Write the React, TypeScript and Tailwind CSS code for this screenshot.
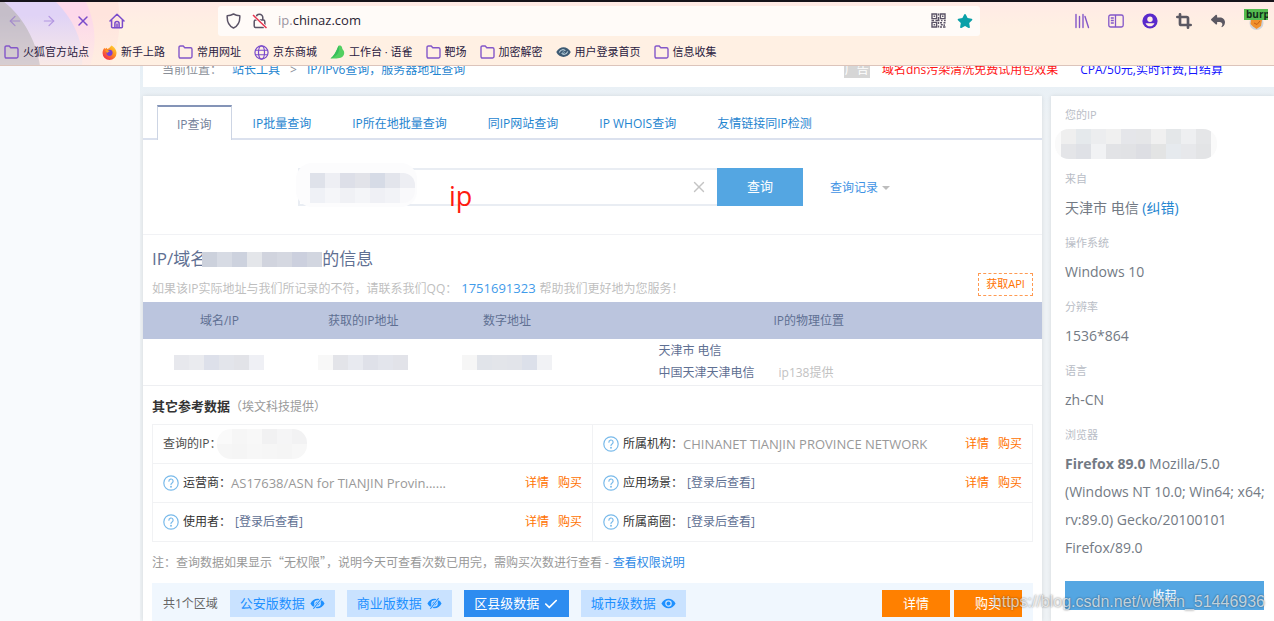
import React, { useState } from "react";
import { ArrowLeft, ArrowRight, Crop, X } from "lucide-react";
import { FaCheck, FaReply, FaStar } from "react-icons/fa6";
import cn from "clsx";

type BookmarkIcon = "folder" | "firefox" | "globe" | "leaf" | "eye";

const bookmarks: { icon: BookmarkIcon; label: string }[] = [
  { icon: "folder", label: "火狐官方站点" },
  { icon: "firefox", label: "新手上路" },
  { icon: "folder", label: "常用网址" },
  { icon: "globe", label: "京东商城" },
  { icon: "leaf", label: "工作台 · 语雀" },
  { icon: "folder", label: "靶场" },
  { icon: "folder", label: "加密解密" },
  { icon: "eye", label: "用户登录首页" },
  { icon: "folder", label: "信息收集" },
];

const tabs = [
  "IP查询",
  "IP批量查询",
  "IP所在地批量查询",
  "同IP网站查询",
  "IP WHOIS查询",
  "友情链接同IP检测",
];

function FolderIcon() {
  return (
    <svg viewBox="0 0 15 14" className="h-[14px] w-[15px]" fill="none" stroke="#8457c9" strokeWidth="1.4">
      <path d="M1 2.4C1 1.5 1.6 1 2.4 1h2.8l1.6 1.8h5.8c.9 0 1.4.5 1.4 1.4v7.4c0 .9-.5 1.4-1.4 1.4H2.4C1.5 13 1 12.5 1 11.6z" />
    </svg>
  );
}

function FirefoxIcon() {
  return (
    <svg viewBox="0 0 16 16" className="h-[15px] w-[15px]">
      <defs>
        <linearGradient id="fox" x1="1" y1="0" x2="0.2" y2="1">
          <stop offset="0" stopColor="#ffe83d" />
          <stop offset="0.45" stopColor="#ff9420" />
          <stop offset="1" stopColor="#f2234f" />
        </linearGradient>
      </defs>
      <path d="M10 .5c2.8 1.5 5.5 4.2 5.5 8A7.4 7.4 0 0 1 .6 8.500C.6 6 1.500 4 2.700 2.800l.5 1.400 1.700-1.400.7 1.400C7.500 4 8.500 2.500 10 .5z" fill="url(#fox)" />
      <circle cx="8" cy="8.300" r="3.300" fill="#7a3fd0" />
      <path d="M3.400 5.500c2-.6 4 .1 4.800 1.500-1.400 0-2 .8-2.600 1.800z" fill="#ff9b20" />
    </svg>
  );
}

function GlobeIcon() {
  return (
    <svg viewBox="0 0 16 16" className="h-[15px] w-[15px]" fill="none" stroke="#7a4bcb" strokeWidth="1.3">
      <circle cx="8" cy="8" r="7" />
      <ellipse cx="8" cy="8" rx="3.2" ry="7" />
      <path d="M1.500 5.600h13M1.500 10.400h13" />
    </svg>
  );
}

function LeafIcon() {
  return (
    <svg viewBox="0 0 15 14" className="h-[14px] w-[15px]">
      <path d="M.5 13.500C4 11 6 7 8.500.8c1.600-.6 3.100.1 3.500 1.500.3 1 .1 1.700 1.200 2.700 1.500 1.800 1.400 4.800-.5 6.400-2.400 2.100-6 2.100-12.200 2.100z" fill="#52cf61" />
      <path d="M8.500.8C6 7 4 11 .5 13.500c3-.8 5.500-2.600 7.500-5.300C9.200 6.400 9.500 3.500 8.500.8z" fill="#37bf5b" />
    </svg>
  );
}

function EyeLogoIcon() {
  return (
    <svg viewBox="0 0 16 12" className="h-[12px] w-[15px]">
      <path d="M.3 6C2 2.500 5 .8 8 .8S14 2.500 15.700 6C14 9.500 11 11.200 8 11.200S2 9.500.3 6z" fill="#3d5a73" />
      <path d="M3.500 6.500c1.500-3.500 5-3.800 6.500-1.500M12.500 5.500c-1.500 3.500-5 3.800-6.500 1.500" fill="none" stroke="#b7cbd6" strokeWidth="1.2" />
      <path d="M7 5l2.500 2M6.500 6.500l2 1.500" stroke="#8fb0c2" />
    </svg>
  );
}

function BookmarkGlyph({ icon }: { icon: BookmarkIcon }) {
  if (icon === "firefox") return <FirefoxIcon />;
  if (icon === "globe") return <GlobeIcon />;
  if (icon === "leaf") return <LeafIcon />;
  if (icon === "eye") return <EyeLogoIcon />;
  return <FolderIcon />;
}

function QrIcon() {
  return (
    <svg viewBox="0 0 15 15" className="h-[15px] w-[15px]" fill="none" stroke="#5b5366" strokeWidth="1.4">
      <path d="M1 1h4.600v4.600H1zM9.400 1H14v4.600H9.400zM1 9.400h4.600V14H1z" />
      <path d="M2.600 3.300h1.500M11 3.300h1.500M2.600 11.700h1.500M7.500.5v2M7.500 4v3M.5 7.500H3M4.500 7.500h4M10 7.500h1.500M13 7.500h1.700M7.500 9v2M7.500 12.500v2M9 9.700h2M12.500 9.700h2M9.800 11.800h2M13.200 11.200v1.800M9 14h2M12 14h2.500" />
    </svg>
  );
}

function EyeIcon({ slashed = false }: { slashed?: boolean }) {
  return (
    <svg viewBox="0 0 16 12" className="h-[11px] w-[15px]" fill="none">
      <path d="M.3 6C2 2.500 4.800.8 8 .8S14 2.500 15.700 6C14 9.500 11.200 11.200 8 11.200S2 9.500.3 6z" fill="currentColor" />
      <circle cx="8" cy="6" r="2.900" stroke="#c9e2ff" strokeWidth="1.4" />
      {slashed && (
        <>
          <path d="M3.500 11.800 12.500.2" stroke="#c9e2ff" strokeWidth="2.600" />
          <path d="M3.500 11.800 12.500.2" stroke="currentColor" strokeWidth="1.100" />
        </>
      )}
    </svg>
  );
}

function BrowserChrome() {
  return (
    <header className="relative h-[66px] shrink-0 overflow-hidden border-t-2 border-b border-t-[#15131a] border-b-[#dcc4bb] bg-linear-to-b from-[#ffeae5] to-[#fff0e3] to-40%">
      {/* 主题背景 */}
      <svg viewBox="0 0 130 64" className="absolute top-0 left-0 h-[64px] w-[130px]">
        <defs>
          <linearGradient id="fade" x1="0" y1="0" x2="0" y2="1">
            <stop offset="0.2" stopColor="#fff0e3" stopOpacity="0" />
            <stop offset="1" stopColor="#fff0e3" stopOpacity="0.8" />
          </linearGradient>
        </defs>
        <path d="M0 0h118c4 24 0 46-8 64H0z" fill="#ffe4dd" />
        <path d="M0 0h86c10 22 11 44 4 64H0z" fill="#fdd8ea" />
        <path d="M0 0h56c18 18 28 40 26 64H0z" fill="#e0d3f6" />
        <path d="M0 0h4c18 14 32 38 36 64H0z" fill="#c5bec9" />
        <path d="M0 0h130v64H0z" fill="url(#fade)" />
        <path d="M0 0h4c18 14 32 38 36 64H0z" fill="#c5bec9" fillOpacity="0.6" />
      </svg>

      <div className="relative flex h-[36px] items-center pt-px pr-[6px] pl-[7px]">
        <nav className="flex items-center gap-[18px] text-[#7a4bcb]">
          <button type="button" aria-label="后退" className="opacity-45">
            <ArrowLeft className="h-4 w-4" strokeWidth={1.8} />
          </button>
          <button type="button" aria-label="前进" className="opacity-45">
            <ArrowRight className="h-4 w-4" strokeWidth={1.8} />
          </button>
          <button type="button" aria-label="停止">
            <X className="h-4 w-4" strokeWidth={2.2} />
          </button>
          <button type="button" aria-label="主页">
            <svg viewBox="0 0 16 16" className="h-4 w-4" fill="none" stroke="currentColor" strokeWidth="1.5" strokeLinecap="round" strokeLinejoin="round">
              <path d="M1 8 8 1.200 15 8M2.600 6.800v7c0 .6.300 1 1 1h8.800c.7 0 1-.4 1-1v-7" />
              <path d="M5.900 14.600v-4a2.100 2.100 0 0 1 4.200 0v4M8 11v3.600" />
            </svg>
          </button>
        </nav>

        <div className="ml-[93px] flex h-[30px] flex-1 items-center gap-[11px] rounded-[3px] bg-[#fffbf8] pr-[7px] pl-2">
          <svg viewBox="0 0 15 16" className="h-4 w-[15px]" fill="none" stroke="#5b5366" strokeWidth="1.5" strokeLinejoin="round">
            <path d="M7.500 1c2 1.200 4 1.700 6.300 1.700.3 5.500-1.300 10-6.300 12.300C2.500 12.700.9 8.200 1.200 2.700 3.500 2.700 5.500 2.200 7.500 1z" />
          </svg>
          <svg viewBox="0 0 15 16" className="h-4 w-[15px]" fill="none" stroke="#5b5366" strokeWidth="1.5">
            <rect x="2.200" y="7" width="10.600" height="7.600" rx="1.500" />
            <path d="M4.200 7V4.500a3.300 3.300 0 0 1 6.600 0V7" />
            <path d="M1 2l13.500 13" stroke="#fffbf8" strokeWidth="3" />
            <path d="M1 2l13.500 13" stroke="#e8334f" />
          </svg>
          <label htmlFor="address" className="text-[13px] whitespace-pre text-[#9b94a1]">
            ip.<span className="text-[#2a2433]">chinaz.com</span>
          </label>
          <input id="address" type="text" className="min-w-0 flex-1 bg-transparent text-[13px] outline-none" />
          <QrIcon />
          <FaStar className="h-4 w-4 text-[#0ba0a8]" />
        </div>

        <div className="ml-[94px] flex items-center gap-[18px]">
          <button type="button" aria-label="书库">
            <svg viewBox="0 0 16 16" className="h-4 w-4" stroke="#8457c9" strokeWidth="1.4" strokeLinecap="round">
              <path d="M2 1.500v13M5.500 3.500v11M9 1.500v13M11 3.500l3.500 11" />
            </svg>
          </button>
          <button type="button" aria-label="侧栏">
            <svg viewBox="0 0 16 14" className="h-[14px] w-4" fill="none" stroke="#8457c9" strokeWidth="1.3">
              <rect x=".8" y="1" width="14.400" height="12" rx="1.800" />
              <path d="M7.500 1v12M2.800 4h3M2.800 6.500h3M2.800 9h3" />
            </svg>
          </button>
          <button type="button" aria-label="账户">
            <svg viewBox="0 0 16 16" className="h-4 w-4">
              <circle cx="8" cy="8" r="7.600" fill="#592acb" />
              <circle cx="8" cy="6.200" r="2.700" fill="#ffeee4" />
              <path d="M3.500 10.200h9c-.8 2-2.500 3.100-4.500 3.100s-3.700-1.100-4.500-3.100z" fill="#ffeee4" />
            </svg>
          </button>
          <button type="button" aria-label="截图">
            <Crop className="h-4 w-4 text-[#5b5862]" strokeWidth={4} />
          </button>
          <button type="button" aria-label="撤销">
            <FaReply className="h-[14px] w-4 text-[#5b5862]" />
          </button>
          <button type="button" aria-label="burp" className="flex h-[24px] w-[24px] flex-col items-center overflow-hidden">
            <span className="w-full shrink-0 overflow-hidden bg-[#55bd51] pl-[2px] text-left text-[10px] leading-[11px] font-bold text-[#12301a]">
              burp
            </span>
            <svg viewBox="0 0 15 11" className="h-[11px] w-[15px]">
              <circle cx="7.500" cy="3" r="7" fill="#cfd3da" />
              <path d="M2 0h11l-1 6-4.500 3L4 6.500 1.500 4z" fill="#f0902c" />
              <path d="M5 3l3 1.500L11 1" stroke="#c75f14" fill="none" />
            </svg>
          </button>
        </div>
      </div>

      <nav className="relative flex h-[27px] items-center gap-[13px] pt-px pl-1">
        {bookmarks.map((item) => (
          <a key={item.label} href="#" className="flex items-center gap-1 text-[11px] whitespace-nowrap text-[#2a2040]">
            <BookmarkGlyph icon={item.icon} />
            {item.label}
          </a>
        ))}
      </nav>
    </header>
  );
}

// 打码色块
function Mosaic({ rows, className }: { rows: string[][]; className?: string }) {
  return (
    <span className={cn("inline-flex flex-col overflow-hidden", className)} aria-hidden="true">
      {rows.map((row, r) => (
        <span key={r} className="flex">
          {row.map((color, c) => (
            <span key={c} className={cn("h-[15px] w-[15px]", color)} />
          ))}
        </span>
      ))}
    </span>
  );
}

function Breadcrumb() {
  return (
    <div className="flex h-[21px] shrink-0 items-end overflow-hidden bg-white pr-[51px] pb-[9px] pl-[19px] text-[12px] leading-[16px] whitespace-nowrap">
      <span className="text-[#8a8f98]">当前位置：</span>
      <a href="#" className="ml-[10px] text-[#1f85d0]">站长工具</a>
      <span className="mx-[10px] text-[#8a8f98]">&gt;</span>
      <a href="#" className="text-[#1f85d0]">IP/IPv6查询，服务器地址查询</a>
      <span className="ml-auto bg-[#d6d6d6] px-[1px] text-white">广告</span>
      <a href="#" className="ml-3 text-[#ff1414]">域名dns污染清洗免费试用包效果</a>
      <a href="#" className="ml-[22px] text-[#1414ff]">CPA/50元,实时计费,日结算</a>
    </div>
  );
}

function SearchPanel() {
  const [query, setQuery] = useState("");

  return (
    <div className="flex h-[95px] items-start border-b border-[#f1f2f5] pt-7 pl-[155px]">
      <div className="relative flex h-[38px] w-[419px] items-center border-2 border-r-0 border-[#e9edf3]">
        <input
          type="text"
          aria-label="查询IP"
          value={query}
          onChange={(e) => setQuery(e.target.value)}
          className="h-full min-w-0 flex-1 px-3 text-[14px] outline-none"
        />
        <button type="button" aria-label="清空" onClick={() => setQuery("")} className="mr-[9px]">
          <X className="h-[18px] w-[18px] text-[#c4c4c4]" strokeWidth={1.8} />
        </button>
        <div className="absolute -top-[7px] -left-[4px] flex h-[44px] w-[121px] items-center rounded-[16px] bg-[#fcfcfd] pt-[6px] pl-[14px]">
          <Mosaic
            className="rounded-r-[12px]"
            rows={[
              ["bg-[#dfe2ea]", "bg-[#eeeff4]", "bg-[#dddfe8]", "bg-[#e2e3e9]", "bg-[#d6dbe6]", "bg-[#e3e5ec]", "bg-[#edeef3]"],
              ["bg-[#eff1f6]", "bg-[#f5f6f9]", "bg-[#f0f1f5]", "bg-[#f4f5f8]", "bg-[#eff0f5]", "bg-[#f2f3f7]", "bg-[#f9f9fb]"],
            ]}
          />
        </div>
        <span className="absolute top-[8px] left-[149px] text-[27px] leading-[36px] text-[#ff1a10]">ip</span>
      </div>
      <button type="button" className="h-[38px] w-[86px] bg-[#54a6e2] text-[13px] text-white">
        查询
      </button>
      <button type="button" className="ml-[27px] flex h-[40px] items-center gap-1 text-[12px] text-[#3f93e4]">
        查询记录
        <span className="h-0 w-0 border-x-4 border-t-4 border-x-transparent border-t-[#bdbdbd]" />
      </button>
    </div>
  );
}

function InfoHeading() {
  return (
    <div className="flex h-[67px] items-end justify-between pr-[9px] pl-[9px]">
      <div className="flex h-full flex-col pt-3">
        <h1 className="flex h-6 items-center text-[17px] text-[#5f7093]">
          IP/域名
          <Mosaic
            className="-ml-[5px]"
            rows={[["bg-[#ccd1dc]", "bg-[#d7dbe4]", "bg-[#cdd2de]", "bg-[#e4e6ea]", "bg-[#d1d4de]", "bg-[#d5d8e1]", "bg-[#ccd0de]", "bg-[#d2d6e0]"]]}
          />
          的信息
        </h1>
        <p className="mt-[7px] text-[12px] leading-[20px] text-[#bfbfbf]">
          如果该IP实际地址与我们所记录的不符，请联系我们QQ：
          <a href="#" className="mx-1 text-[13px] text-[#3f9bea]">1751691323</a>
          帮助我们更好地为您服务！
        </p>
      </div>
      <button type="button" className="mb-[6px] h-[23px] w-[55px] border border-dashed border-[#ff9a52] text-[11px] whitespace-nowrap text-[#ff7200]">
        获取API
      </button>
    </div>
  );
}

function LocationTable() {
  return (
    <table className="w-full table-fixed text-[12px] text-[#5f7093]">
      <thead>
        <tr className="h-[37px] bg-[#bbc5de]">
          <th className="w-[17%] pt-px font-normal">域名/IP</th>
          <th className="w-[15%] pt-px font-normal">获取的IP地址</th>
          <th className="w-[17%] pt-px font-normal">数字地址</th>
          <th className="w-[51%] pt-px pr-2 font-normal">IP的物理位置</th>
        </tr>
      </thead>
      <tbody>
        <tr className="h-[46px] border-b border-[#eeeff2]">
          <td className="text-center">
            <Mosaic className="align-middle" rows={[["bg-[#e7e8ed]", "bg-[#eaebef]", "bg-[#dde0ea]", "bg-[#e3e5eb]", "bg-[#e2e3e8]", "bg-[#eff0f5]"]]} />
          </td>
          <td className="text-center">
            <Mosaic className="align-middle" rows={[["bg-[#f8f8f8]", "bg-[#e3e4e9]", "bg-[#e8eaf0]", "bg-[#dfe1e9]", "bg-[#e3e5ec]", "bg-[#e2e3e9]"]]} />
          </td>
          <td className="text-center">
            <Mosaic className="align-middle" rows={[["bg-[#f6f6f6]", "bg-[#e1e4ea]", "bg-[#e3e5ea]", "bg-[#e2e4ea]", "bg-[#dce0ea]", "bg-[#f1f2f5]"]]} />
          </td>
          <td className="pt-px pl-[75px] leading-[22px]">
            <p>天津市 电信</p>
            <p>
              中国天津天津电信
              <span className="ml-6 text-[#c2c2c2]">ip138提供</span>
            </p>
          </td>
        </tr>
      </tbody>
    </table>
  );
}

interface DataCellProps {
  label: string;
  value?: string;
  locked?: boolean; // 登录后才能查看
  actions?: boolean; // 是否显示详情/购买
}

function DataCell({ label, value, locked = false, actions = false }: DataCellProps) {
  return (
    <td className="h-[39px] border border-[#f1f2f4] px-[10px]">
      <div className="flex items-center whitespace-nowrap">
        <svg viewBox="0 0 16 16" className="mr-1 h-4 w-4" fill="none" stroke="#79baea" strokeWidth="1.2" strokeLinecap="round">
          <circle cx="8" cy="8" r="7.200" />
          <path d="M5.900 6.200a2.100 2.100 0 1 1 3.200 1.700c-.7.500-1.100.8-1.100 1.600" />
          <circle cx="8" cy="11.700" r=".4" fill="#79baea" />
        </svg>
        <span className="text-[#333333]">{label}：</span>
        {locked ? (
          <a href="#" className="ml-1 text-[#5f7093]">[登录后查看]</a>
        ) : (
          <span className="text-[13px] leading-[18px] text-[#999999]">{value}</span>
        )}
        {actions && (
          <span className="ml-auto flex gap-[9px] text-[#ff7200]">
            <a href="#">详情</a>
            <a href="#">购买</a>
          </span>
        )}
      </div>
    </td>
  );
}

function ReferenceData() {
  return (
    <section className="px-[9px] text-[12px]">
      <h2 className="flex h-[38px] items-center pt-1 text-[13px] font-bold text-[#333333]">
        其它参考数据
        <span className="text-[12px] font-normal text-[#9a9a9a]">（埃文科技提供）</span>
      </h2>
      <table className="w-full table-fixed border-collapse">
        <tbody>
          <tr>
            <td className="h-[39px] border border-[#f1f2f4] px-[10px]">
              <div className="flex items-center text-[#4d4d4d]">
                查询的IP：
                <Mosaic
                  className="-ml-[5px] rounded-[14px]"
                  rows={[
                    ["bg-[#fafafa]", "bg-[#f6f6f6]", "bg-[#f8f8f8]", "bg-[#f1f1f2]", "bg-[#f5f5f6]", "bg-[#f2f2f3]"],
                    ["bg-[#f6f6f6]", "bg-[#f5f5f5]", "bg-[#f7f7f7]", "bg-[#f6f6f6]", "bg-[#f5f5f5]", "bg-[#f7f7f7]"],
                  ]}
                />
              </div>
            </td>
            <DataCell label="所属机构" value="CHINANET TIANJIN PROVINCE NETWORK" actions />
          </tr>
          <tr>
            <DataCell label="运营商" value="AS17638/ASN for TIANJIN Provin......" actions />
            <DataCell label="应用场景" locked actions />
          </tr>
          <tr>
            <DataCell label="使用者" locked actions />
            <DataCell label="所属商圈" locked />
          </tr>
        </tbody>
      </table>
      <p className="flex h-[41px] items-center gap-1 font-['Noto_Sans_CJK_SC',sans-serif] whitespace-nowrap text-[#999999]">
        注：查询数据如果显示“无权限”，说明今天可查看次数已用完，需购买次数进行查看 -
        <a href="#" className="text-[#2e8ae6]">查看权限说明</a>
      </p>
      <div className="flex h-[46px] items-center gap-3 bg-[#f0f7fe] px-[11px] pb-[4px] whitespace-nowrap">
        <span className="text-[#666666]">共1个区域</span>
        <LevelButton label="公安版数据" state="hidden" />
        <LevelButton label="商业版数据" state="hidden" />
        <LevelButton label="区县级数据" state="active" />
        <LevelButton label="城市级数据" state="visible" />
        <div className="ml-auto flex gap-1 text-[13px] text-white">
          <button type="button" className="h-[27px] w-[68px] bg-[#ff8000]">详情</button>
          <button type="button" className="h-[27px] w-[68px] bg-[#ff8000]">购买</button>
        </div>
      </div>
    </section>
  );
}

function LevelButton({ label, state }: { label: string; state: "hidden" | "active" | "visible" }) {
  return (
    <button
      type="button"
      className={cn(
        "flex h-[27px] w-[105px] items-center justify-center gap-[5px] text-[13px]",
        state === "active" ? "bg-[#2d8cf0] text-white" : "bg-[#c9e2ff] text-[#1e90ff]"
      )}
    >
      {label}
      {state === "active" ? <FaCheck className="h-[14px] w-[14px]" /> : <EyeIcon slashed={state === "hidden"} />}
    </button>
  );
}

function SideItem({ label, children }: { label: string; children: React.ReactNode }) {
  return (
    <div className="mb-[7px]">
      <dt className="mb-px text-[11px] leading-[28px] text-[#b9bdc6]">{label}</dt>
      <dd className="-mr-2 text-[14px] leading-[28px] text-[#737a84]">{children}</dd>
    </div>
  );
}

function Sidebar() {
  return (
    <aside className="w-[223px] shrink-0 bg-white pt-[5px] pr-[10px] pl-[14px] shadow-[0_0_4px_rgba(0,0,0,0.1)]">
      <dl>
        <SideItem label="您的IP">
          <span className="-ml-[10px] flex h-[28px] items-center">
            <Mosaic
              className="rounded-[14px] bg-[#fafafa] px-[6px]"
              rows={[
                ["bg-[#efefef]", "bg-[#e5e9ec]", "bg-[#ecedef]", "bg-[#f0f0f0]", "bg-[#e5e6ea]", "bg-[#e5e6e8]", "bg-[#f0f0f0]", "bg-[#e4e7e9]", "bg-[#eeeff1]", "bg-[#e5e6e8]"],
                ["bg-[#e4e5e8]", "bg-[#dfe1e6]", "bg-[#f1f2f4]", "bg-[#e2e3e6]", "bg-[#e1e2e5]", "bg-[#dddee3]", "bg-[#e3e4e4]", "bg-[#e6eaee]", "bg-[#e7e8eb]", "bg-[#e3e4e6]"],
              ]}
            />
          </span>
        </SideItem>
        <SideItem label="来自">
          天津市 电信 <a href="#" className="text-[#1f85d0]">(纠错)</a>
        </SideItem>
        <SideItem label="操作系统">Windows 10</SideItem>
        <SideItem label="分辨率">1536*864</SideItem>
        <SideItem label="语言">zh-CN</SideItem>
        <SideItem label="浏览器">
          <b>Firefox 89.0</b> Mozilla/5.0 (Windows NT 10.0; Win64; x64; rv:89.0) Gecko/20100101 Firefox/89.0
        </SideItem>
      </dl>
      <button type="button" className="mt-3 h-[29px] w-full bg-[#54a6e2] text-[12px] text-white">
        收起
      </button>
    </aside>
  );
}

export default function App() {
  const [activeTab, setActiveTab] = useState(0);

  return (
    <div className="relative flex h-screen flex-col overflow-hidden bg-[#f8fafd] font-['Open_Sans','Noto_Sans_CJK_SC',sans-serif]">
      <BrowserChrome />
      <div className="flex min-h-0 flex-1 flex-col bg-linear-to-b from-[#e6eff6] to-[#eef2f5] to-10% pl-[143px] shadow-[inset_140px_0_0_#f8fafd]">
        <Breadcrumb />
        <div className="mt-[9px] flex min-h-0 flex-1 gap-[9px]">
          <main className="min-w-0 flex-1 bg-white shadow-[0_0_4px_rgba(0,0,0,0.1)]">
            <div className="flex h-[44px] items-end gap-px border-b-2 border-[#dbe1ee] pl-[14px]">
              {tabs.map((tab, index) => (
                <button
                  key={tab}
                  type="button"
                  onClick={() => setActiveTab(index)}
                  className={cn(
                    "-mb-[2px] h-[35px] pt-[2px] text-[12px]",
                    index === activeTab
                      ? "border-x border-t-2 border-x-[#cdd5e4] border-t-[#8494b7] bg-white px-[19px] text-[#74819a]"
                      : "px-5 text-[#1f85d0]"
                  )}
                >
                  {tab}
                </button>
              ))}
            </div>
            <SearchPanel />
            <InfoHeading />
            <LocationTable />
            <ReferenceData />
          </main>
          <Sidebar />
        </div>
      </div>
      {/* 水印 */}
      <span className="pointer-events-none absolute right-[9px] bottom-[9px] font-['Liberation_Sans',sans-serif] text-[16px] leading-[20px] text-white/70 [text-shadow:0_0_2px_rgba(0,0,0,0.55)]">
        https://blog.csdn.net/weixin_51446936
      </span>
    </div>
  );
}
